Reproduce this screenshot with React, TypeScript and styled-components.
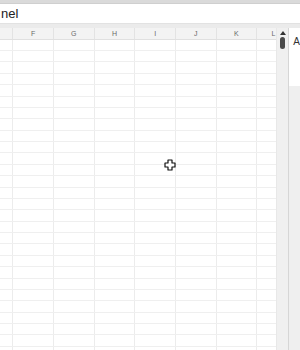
import React from 'react'
import styled, { createGlobalStyle } from 'styled-components'

const GlobalStyle = createGlobalStyle`
  html, body {
    margin: 0;
    padding: 0;
    background: #ffffff;
    overflow: hidden;
  }
  body {
    font-family: 'Liberation Sans', Arial, sans-serif;
  }
`

const COLUMNS = ['', 'F', 'G', 'H', 'I', 'J', 'K', 'L']
const ROW_COUNT = 28

const Page = styled.div`
  width: 300px;
  height: 350px;
  display: flex;
  flex-direction: column;
  overflow: hidden;
`
const TopBar = styled.div`
  height: 3px;
  background: #dadada;
  border-bottom: 1px solid #cfcfcf;
  flex-shrink: 0;
`
const FormulaBar = styled.div`
  height: 19px;
  display: flex;
  align-items: center;
  padding-left: 1px;
  font-size: 13px;
  color: #222;
  background: #fff;
  flex-shrink: 0;
`
const Gap = styled.div`
  height: 4px;
  background: #ebebeb;
  border-top: 1px solid #e2e2e2;
  flex-shrink: 0;
`
const Body = styled.div`
  flex: 1;
  display: flex;
  min-height: 0;
`
const Sheet = styled.div`
  position: relative;
  width: 279px;
  display: flex;
  flex-direction: column;
  overflow: hidden;
`
const Row = styled.div<{ $header?: boolean; $h: number }>`
  display: grid;
  grid-template-columns: 13.33px repeat(6, 40.67px) 1fr;
  height: ${({ $h }) => $h}px;
  flex-shrink: 0;
  box-sizing: border-box;
  border-bottom: 1px solid ${({ $header }) => ($header ? '#e0e0e0' : '#efefef')};
  background: ${({ $header }) => ($header ? '#f3f3f3' : '#fff')};
`
const Cell = styled.div<{ $header?: boolean }>`
  border-right: 1px solid ${({ $header }) => ($header ? '#e3e3e3' : '#ececec')};
  font-size: 7px;
  color: #6a6a6a;
  display: flex;
  align-items: center;
  justify-content: center;
  overflow: hidden;
  &:last-child {
    border-right: none;
    justify-content: flex-end;
    padding-right: 1px;
  }
`
const Cursor = styled.svg`
  position: absolute;
  left: 164px;
  top: 131px;
`
const Scrollbar = styled.div`
  width: 11px;
  background: #f0f0f0;
  border-left: 1px solid #e8e8e8;
  display: flex;
  flex-direction: column;
  align-items: center;
  padding-top: 3px;
  gap: 2px;
  flex-shrink: 0;
`
const Arrow = styled.div`
  width: 0;
  height: 0;
  border-left: 3px solid transparent;
  border-right: 3px solid transparent;
  border-bottom: 4px solid #333;
`
const Thumb = styled.div`
  width: 5px;
  height: 12px;
  border-radius: 3px;
  background: #4a4a4a;
`
const Divider = styled.div`
  width: 1px;
  background: #d6d6d6;
  flex-shrink: 0;
`
const SidePanel = styled.div`
  flex: 1;
  display: flex;
  flex-direction: column;
  background: #efefef;
`
const PanelHead = styled.div`
  height: 50px;
  background: #fff;
  padding: 8px 0 0 4px;
  font-size: 10px;
  color: #333;
`

const App = () => {
  const rows = Array.from({ length: ROW_COUNT }, (_, i) => i)

  return (
    <>
      <GlobalStyle />
      <Page>
        <TopBar />
        <FormulaBar>nel</FormulaBar>
        <Gap />
        <Body>
          <Sheet>
            <Row $header $h={12}>
              {COLUMNS.map((c, i) => (
                <Cell key={i} $header>
                  {c}
                </Cell>
              ))}
            </Row>
            {rows.map((r) => (
              <Row key={r} $h={r === 0 ? 11 : 11.38}>
                {COLUMNS.map((_, i) => (
                  <Cell key={i} />
                ))}
              </Row>
            ))}
            <Cursor width="12" height="12" viewBox="0 0 12 12">
              <path
                d="M4 1h4v3h3v4H8v3H4V8H1V4h3z"
                fill="#fff"
                stroke="#111"
                strokeWidth="1.2"
                strokeLinejoin="round"
              />
            </Cursor>
          </Sheet>
          <Scrollbar>
            <Arrow />
            <Thumb />
          </Scrollbar>
          <Divider />
          <SidePanel>
            <PanelHead>A</PanelHead>
          </SidePanel>
        </Body>
      </Page>
    </>
  )
}

export default App
